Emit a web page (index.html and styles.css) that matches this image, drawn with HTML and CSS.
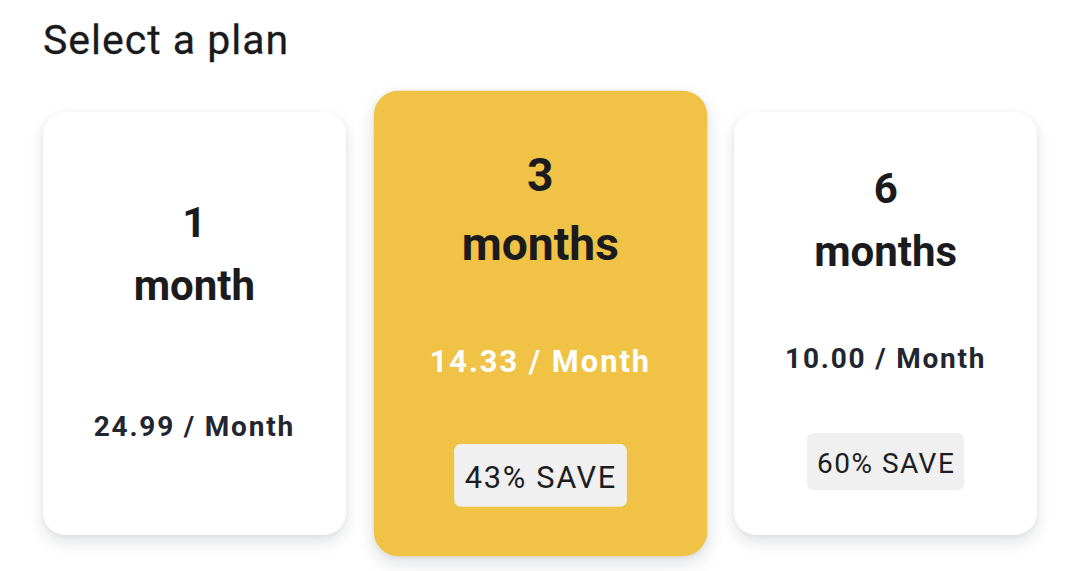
FILE: index.html
```html
<!DOCTYPE html>
<html lang="en">
<head>
<meta charset="utf-8">
<title>Select a plan</title>
<link rel="stylesheet" href="styles.css">
</head>
<body>
<main class="page">
  <h1 class="heading">Select a plan</h1>
  <div class="plans">
    <div class="plan">
      <div class="plan-title"><span>1</span><span>month</span></div>
      <div class="plan-price">24.99 / Month</div>
    </div>
    <div class="plan plan-selected">
      <div class="plan-title"><span>3</span><span>months</span></div>
      <div class="plan-price">14.33 / Month</div>
      <div class="plan-badge">43% SAVE</div>
    </div>
    <div class="plan">
      <div class="plan-title"><span>6</span><span>months</span></div>
      <div class="plan-price">10.00 / Month</div>
      <div class="plan-badge">60% SAVE</div>
    </div>
  </div>
</main>
</body>
</html>
```
FILE: styles.css
```css
* { box-sizing: border-box; }

html, body {
  margin: 0;
  background: #ffffff;
}

body {
  min-height: 571px;
  font-family: Roboto, "Liberation Sans", Arial, sans-serif;
  color: #1d1d1f;
}

.page {
  padding: 17px 43px 36px;
}

.heading {
  margin: 0 0 48px;
  font-size: 41px;
  font-weight: 400;
  line-height: 47px;
  letter-spacing: 1px;
  color: #1a1a1c;
  -webkit-text-stroke: 0.3px #1a1a1c;
}

.plans {
  display: flex;
  gap: 43px;
}

.plan {
  flex: 1 1 0;
  height: 423px;
  background: #ffffff;
  border-radius: 22px;
  box-shadow: 0 7px 15px rgba(20, 30, 50, 0.13), 0 1px 4px rgba(20, 30, 50, 0.05);
  display: flex;
  flex-direction: column;
  align-items: center;
  justify-content: space-evenly;
  text-align: center;
}

.plan-selected {
  background: #f0c347;
  transform: scale(1.1);
}

.plan-title {
  display: flex;
  flex-direction: column;
  align-items: center;
  font-size: 42px;
  font-weight: 700;
  line-height: 63px;
  color: #1b1b1d;
}

.plan-price {
  margin: 10px 0 8px;
  font-size: 28px;
  font-weight: 700;
  line-height: 42px;
  letter-spacing: 1.8px;
  color: #222630;
}

.plan-selected .plan-price {
  color: #ffffff;
}

.plan-badge {
  background: #f0f0f0;
  border-radius: 6px;
  padding: 10px 9px 5px 10px;
  font-size: 28px;
  font-weight: 400;
  line-height: 42px;
  letter-spacing: 1.5px;
  color: #1d1d1f;
}
```
